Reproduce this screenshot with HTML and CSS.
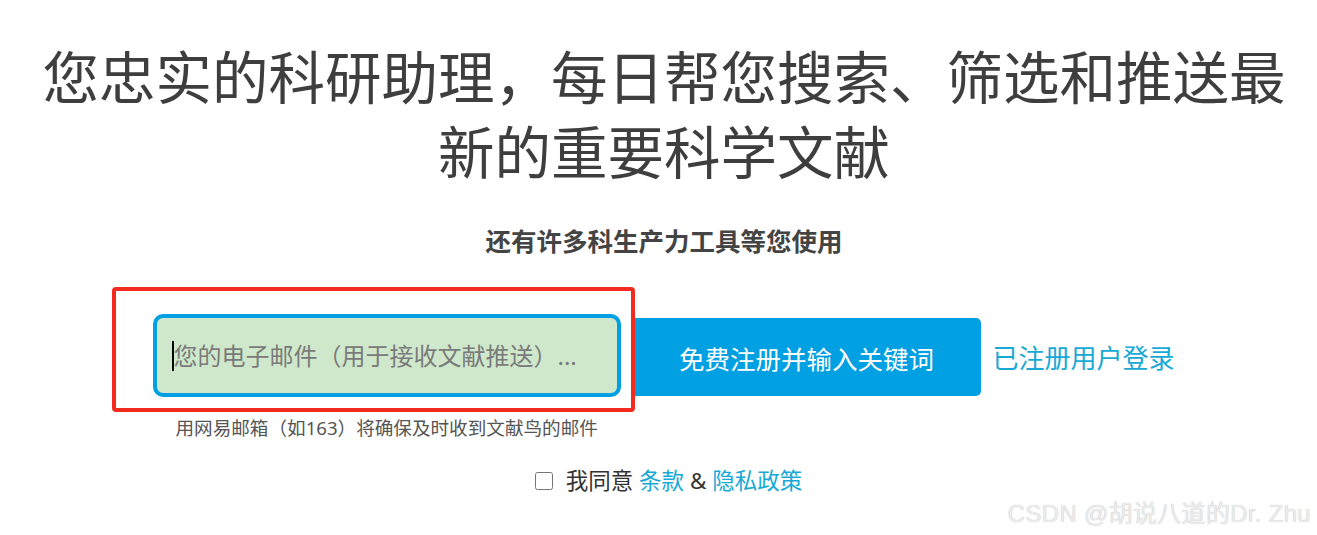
FILE: index.html
```html
<!DOCTYPE html>
<html lang="zh-CN">
<head>
    <meta charset="UTF-8">
    <meta name="viewport" content="width=device-width, initial-scale=1.0">
    <title>文献鸟 - 注册</title>
    <link rel="stylesheet" href="styles.css">
</head>
<body>
    <main class="page">
        <h1 class="hero-title">您忠实的科研助理，每日帮您搜索、筛选和推送最新的重要科学文献</h1>
        <p class="hero-sub">还有许多科生产力工具等您使用</p>

        <!-- 注册表单 -->
        <form class="signup-row" onsubmit="return false;">
            <div class="email-col">
                <div class="email-wrap">
                    <input class="email-input" type="email" name="email" autofocus
                           placeholder="您的电子邮件（用于接收文献推送）...">
                    <span class="caret"></span>
                    <span class="mark-box"></span>
                </div>
                <p class="email-hint">用网易邮箱（如163）将确保及时收到文献鸟的邮件</p>
            </div>
            <button class="signup-btn" type="submit">免费注册并输入关键词</button>
            <a class="login-link" href="#">已注册用户登录</a>
        </form>

        <label class="agree">
            <input type="checkbox" class="agree-box">
            <span>我同意 <a href="#">条款</a> &amp; <a href="#">隐私政策</a></span>
        </label>
    </main>

    <div class="watermark">CSDN @胡说八道的Dr. Zhu</div>
</body>
</html>
```

FILE: styles.css
```css
body {
    margin: 0;
    background-color: #fff;
    font-family: "Noto Sans", "Noto Sans CJK SC", sans-serif;
    color: #444;
}
a {
    color: #17a9d5;
    text-decoration: none;
}
.page {
    padding-left: 11px;
    display: flex;
    flex-direction: column;
    align-items: center;
}
.hero-title {
    max-width: 1270px;
    margin: 40px 0 0;
    font-size: 56.5px;
    font-weight: normal;
    line-height: 75px;
    text-align: center;
    color: #3e3e3e;
}
.hero-sub {
    margin: 33px 0 0;
    font-size: 25.5px;
    font-weight: bold;
    line-height: 36px;
    color: #444;
}
.signup-row {
    margin-top: 55px;
    display: flex;
    align-items: flex-start;
}
.email-col {
    width: 468px;
    display: flex;
    flex-direction: column;
}
.email-wrap {
    position: relative;
}
.email-input {
    box-sizing: border-box;
    width: 100%;
    height: 83px;
    padding: 0 14px 0 16px;
    border: 4px solid #00a0e3;
    border-radius: 10px;
    background-color: #cfe8cb;
    font-family: inherit;
    font-size: 24px;
    color: #333;
    caret-color: transparent;
    outline: none;
}
.email-input::placeholder {
    color: #7a7a7a;
}
.caret {
    position: absolute;
    left: 19px;
    top: 27px;
    width: 2px;
    height: 30px;
    background-color: #000;
}
.mark-box {
    position: absolute;
    left: -41px;
    top: -27px;
    width: 523px;
    height: 125px;
    box-sizing: border-box;
    border: 4px solid #f22a1f;
    border-radius: 4px;
    pointer-events: none;
    z-index: 2;
}
.email-hint {
    margin: 19px 0 0;
    padding-left: 22px;
    font-size: 18.6px;
    line-height: 24px;
    color: #555;
}
.signup-btn {
    width: 350px;
    height: 78px;
    margin: 4px 0 0 10px;
    border: none;
    border-radius: 5px;
    background-color: #01a0e2;
    color: #fff;
    font-family: inherit;
    font-size: 25.5px;
    cursor: pointer;
}
.login-link {
    margin-left: 11px;
    font-size: 26px;
    line-height: 88px;
}
.agree {
    margin: 26px 0 0 9px;
    display: flex;
    align-items: center;
    font-size: 22.5px;
    line-height: 30px;
    color: #333;
}
.agree-box {
    width: 18px;
    height: 18px;
    margin: 0 13px 0 0;
}
.watermark {
    position: absolute;
    right: 6px;
    bottom: 6px;
    font-family: "Liberation Sans", "Noto Sans CJK SC", sans-serif;
    font-size: 24px;
    letter-spacing: 0.3px;
    color: #ececec;
    text-shadow: 0 0 1px #b8b8b8;
}
```
